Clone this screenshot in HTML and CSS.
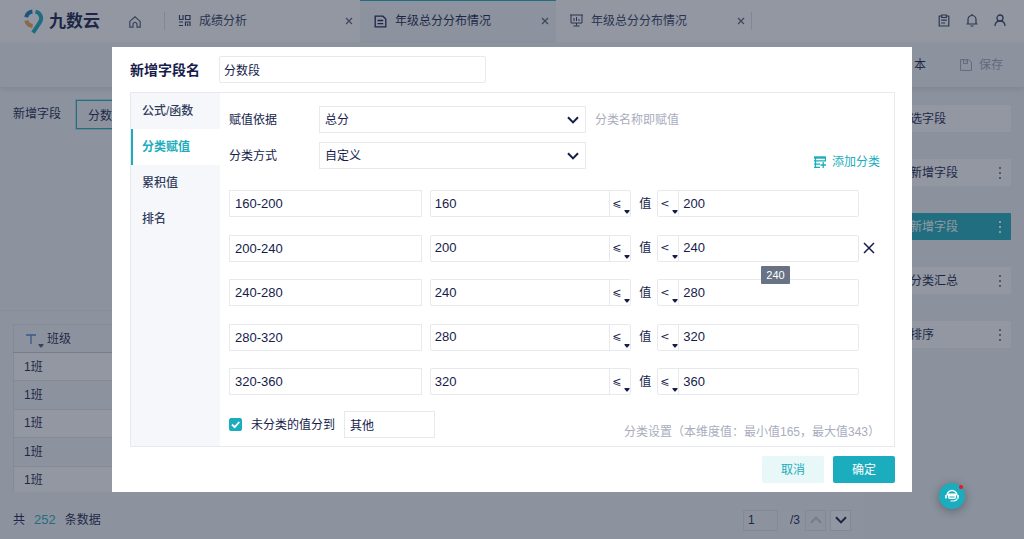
FILE: index.html
```html
<!DOCTYPE html>
<html lang="zh-CN">
<head>
<meta charset="utf-8">
<meta name="viewport" content="width=device-width, initial-scale=1">
<title>九数云</title>
<link rel="stylesheet" href="styles.css">
</head>
<body>
<svg class="defs" aria-hidden="true">
  <symbol id="i-chevron" viewBox="0 0 12 8"><path d="M1 1.2 6 6.400l5-5.200" fill="none" stroke="currentColor" stroke-width="2"/></symbol>
  <symbol id="i-close" viewBox="0 0 12 12"><path d="m1 1 10 10M11 1 1 11" fill="none" stroke="currentColor" stroke-width="1.500"/></symbol>
  <symbol id="i-tab-close" viewBox="0 0 8 8"><path d="m1 1 6 6M7 1 1 7" fill="none" stroke="currentColor" stroke-width="1.300"/></symbol>
  <symbol id="i-caret" viewBox="0 0 6 4"><path d="M0.500 0h5v1L3.500 3.500h-1L.5 1z" fill="currentColor"/></symbol>
  <symbol id="i-more" viewBox="0 0 4 12"><path d="M1 0h2v2H1zM1 5h2v2H1zM1 10h2v2H1z" fill="currentColor"/></symbol>
</svg>

<div class="page">
  <header class="topbar">
    <a class="logo" href="#">
      <svg width="20" height="25" viewBox="0 0 20 25" fill="none" stroke-width="4">
        <path d="M2.200 8.200A7.500 7.500 0 0 1 8.400 2.600" stroke="#1779bd"/>
        <path d="M2.200 11.500a7.500 7.500 0 0 0 6.400 5.500" stroke="#f2a34a"/>
        <path d="M11.500 2.600c5.500 1.200 7.200 7 4 11.400L9 23.600" stroke="#16a9b8"/>
      </svg>
      <span>九数云</span>
    </a>
    <a class="home" href="#" aria-label="首页">
      <svg width="12" height="12" viewBox="0 0 12 12" fill="none" stroke="currentColor" stroke-width="1.200"><path d="M.8 5.400 6 .9l5.200 4.500v5.800H8V8.400a2 2 0 0 0-4 0v2.800H.8z"/></svg>
    </a>
    <nav class="tabs" aria-label="打开的页面">
      <div class="tab">
        <svg width="13" height="13" viewBox="0 0 13 13" fill="none" stroke="currentColor" stroke-width="1.200"><path d="M1.500 1v4.500H5V1M7.500 1.500H12v4H7.500zM1 8h4M1 11.500h4M7 8h5v4M7.500 7.500V12M9.700 9.500V12"/></svg>
        <a href="#">成绩分析</a>
        <button class="tab-close" aria-label="关闭"><svg width="8" height="8"><use href="#i-tab-close"/></svg></button>
      </div>
      <div class="tab tab-active">
        <svg width="13" height="13" viewBox="0 0 13 13" fill="none" stroke="currentColor" stroke-width="1.300"><path d="M1.200 1.200H9L11.800 4v7.800H1.200zM3.500 5.500h5.700M3.500 8.700h5.700"/></svg>
        <a href="#" aria-current="page">年级总分分布情况</a>
        <button class="tab-close" aria-label="关闭"><svg width="8" height="8"><use href="#i-tab-close"/></svg></button>
      </div>
      <div class="tab">
        <svg width="13" height="13" viewBox="0 0 13 13" fill="none" stroke="currentColor"><path d="M0 1h13M1 1v8h11V1M4 4v3M6.500 3v4M9 5v2M6.500 9v2.500M3.500 12h6"/></svg>
        <a href="#">年级总分分布情况</a>
        <button class="tab-close" aria-label="关闭"><svg width="8" height="8"><use href="#i-tab-close"/></svg></button>
      </div>
    </nav>
    <div class="top-actions">
      <button aria-label="任务"><svg width="12" height="13" viewBox="0 0 12 13" fill="none" stroke="currentColor" stroke-width="1.200"><path d="M3.500 2H1.200v10h9.600V2H8.500M3.700 1h4.600v2.500H3.700zM3.200 6.200h5.600M3.200 9h4"/></svg></button>
      <button aria-label="通知"><svg width="12" height="13" viewBox="0 0 12 13" fill="none" stroke="currentColor" stroke-width="1.200"><path d="M.5 10h11M2 10V5.500a4 4 0 0 1 8 0V10M6 0v1.500M4.500 12h3"/></svg></button>
      <button aria-label="用户"><svg width="12" height="13" viewBox="0 0 12 13" fill="none" stroke="currentColor" stroke-width="1.300"><circle cx="6" cy="4" r="3"/><path d="M.9 12c.2-3 2-5 5.100-5s4.900 2 5.100 5"/></svg></button>
    </div>
  </header>

  <div class="toolbar">
    <button class="tool">本</button>
    <button class="tool tool-muted" disabled>
      <svg width="12" height="12" viewBox="0 0 12 12" fill="none" stroke="currentColor"><path d="M.6.6h8.200l2.600 2.600v8.200H.6zM3.500.6v4h4v-4M6 1.500v1.500"/></svg>保存
    </button>
  </div>

  <div class="workspace">
    <main class="main">
      <section class="field-bar">
        <label for="field">新增字段</label>
        <input id="field" class="field-chip" value="分数段">
      </section>
      <section class="table-area">
        <table class="data">
          <thead><tr><th scope="col"><div class="th">
            <svg class="type" width="10" height="10" viewBox="0 0 10 10"><path d="M0 1h10M5 1v9" stroke="#4a7fd8" stroke-width="1.300"/></svg>
            <svg class="th-caret" width="6" height="4"><use href="#i-caret"/></svg>
            <span>班级</span><i class="filter"></i>
          </div></th><th></th></tr></thead>
          <tbody>
            <tr><td>1班</td><td></td></tr>
            <tr><td>1班</td><td></td></tr>
            <tr><td>1班</td><td></td></tr>
            <tr><td>1班</td><td></td></tr>
            <tr><td>1班</td><td></td></tr>
          </tbody>
        </table>
      </section>
      <footer class="pager">
        <span>共</span><span class="count">252</span><span>条数据</span>
        <div class="pages">
          <input class="page-no" aria-label="页码" value="1">
          <span class="total">/3</span>
          <button class="page-btn page-off" aria-label="上一页" disabled><svg class="flip" width="12" height="8"><use href="#i-chevron"/></svg></button>
          <button class="page-btn" aria-label="下一页"><svg width="12" height="8"><use href="#i-chevron"/></svg></button>
        </div>
      </footer>
    </main>
    <aside class="steps">
      <div class="step"><span>选字段</span></div>
      <div class="step"><span>新增字段</span><button aria-label="更多"><svg width="4" height="12"><use href="#i-more"/></svg></button></div>
      <div class="step step-active"><span>新增字段</span><button aria-label="更多"><svg width="4" height="12"><use href="#i-more"/></svg></button></div>
      <div class="step"><span>分类汇总</span><button aria-label="更多"><svg width="4" height="12"><use href="#i-more"/></svg></button></div>
      <div class="step"><span>排序</span><button aria-label="更多"><svg width="4" height="12"><use href="#i-more"/></svg></button></div>
    </aside>
  </div>
</div>

<div class="overlay">
  <form class="modal" role="dialog" aria-modal="true" aria-labelledby="modal-title">
    <div class="modal-head">
      <label id="modal-title" for="name">新增字段名</label>
      <input id="name" class="box name" value="分数段">
    </div>
    <div class="panel">
      <nav class="side">
        <a href="#">公式/函数</a>
        <a class="side-active" href="#" aria-current="true">分类赋值</a>
        <a href="#">累积值</a>
        <a href="#">排名</a>
      </nav>
      <div class="content">
        <div class="settings">
          <div class="setting-list">
            <div class="setting">
              <label for="basis">赋值依据</label>
              <div class="pick"><select id="basis" class="box"><option>总分</option></select><svg width="12" height="8"><use href="#i-chevron"/></svg></div>
              <span class="hint">分类名称即赋值</span>
            </div>
            <div class="setting">
              <label for="mode">分类方式</label>
              <div class="pick"><select id="mode" class="box"><option>自定义</option></select><svg width="12" height="8"><use href="#i-chevron"/></svg></div>
            </div>
          </div>
          <button type="button" class="add">
            <svg width="12" height="12" viewBox="0 0 12 12" fill="none" stroke="currentColor"><path d="M0 1.500h12" stroke-width="2.400"/><path d="M0 4.800h11.500V1M1.500 1v10.500M0 8.200h6M0 11.400h6M9.200 6v6M6.500 9h5.500" stroke-width="1.300"/></svg>添加分类
          </button>
        </div>

        <div class="ranges">
          <div class="range">
            <input class="box label-box" aria-label="分类名称" value="160-200">
            <div class="bound"><input aria-label="下限" value="160"><div class="op op-end"><select aria-label="下限比较"><option>⩽</option><option>&lt;</option></select><svg width="6" height="4"><use href="#i-caret"/></svg></div></div>
            <span class="mid">值</span>
            <div class="bound"><div class="op op-start"><select aria-label="上限比较"><option>&lt;</option><option>⩽</option></select><svg width="6" height="4"><use href="#i-caret"/></svg></div><input aria-label="上限" value="200"></div>
          </div>
          <div class="range">
            <input class="box label-box" aria-label="分类名称" value="200-240">
            <div class="bound"><input aria-label="下限" value="200"><div class="op op-end"><select aria-label="下限比较"><option>⩽</option><option>&lt;</option></select><svg width="6" height="4"><use href="#i-caret"/></svg></div></div>
            <span class="mid">值</span>
            <div class="bound"><div class="op op-start"><select aria-label="上限比较"><option>&lt;</option><option>⩽</option></select><svg width="6" height="4"><use href="#i-caret"/></svg></div><input aria-label="上限" value="240"><span class="tooltip" role="tooltip">240</span></div>
            <button type="button" class="remove" aria-label="删除分类"><svg width="12" height="12"><use href="#i-close"/></svg></button>
          </div>
          <div class="range">
            <input class="box label-box" aria-label="分类名称" value="240-280">
            <div class="bound"><input aria-label="下限" value="240"><div class="op op-end"><select aria-label="下限比较"><option>⩽</option><option>&lt;</option></select><svg width="6" height="4"><use href="#i-caret"/></svg></div></div>
            <span class="mid">值</span>
            <div class="bound"><div class="op op-start"><select aria-label="上限比较"><option>&lt;</option><option>⩽</option></select><svg width="6" height="4"><use href="#i-caret"/></svg></div><input aria-label="上限" value="280"></div>
          </div>
          <div class="range">
            <input class="box label-box" aria-label="分类名称" value="280-320">
            <div class="bound"><input aria-label="下限" value="280"><div class="op op-end"><select aria-label="下限比较"><option>⩽</option><option>&lt;</option></select><svg width="6" height="4"><use href="#i-caret"/></svg></div></div>
            <span class="mid">值</span>
            <div class="bound"><div class="op op-start"><select aria-label="上限比较"><option>&lt;</option><option>⩽</option></select><svg width="6" height="4"><use href="#i-caret"/></svg></div><input aria-label="上限" value="320"></div>
          </div>
          <div class="range">
            <input class="box label-box" aria-label="分类名称" value="320-360">
            <div class="bound"><input aria-label="下限" value="320"><div class="op op-end"><select aria-label="下限比较"><option>⩽</option><option>&lt;</option></select><svg width="6" height="4"><use href="#i-caret"/></svg></div></div>
            <span class="mid">值</span>
            <div class="bound"><div class="op op-start"><select aria-label="上限比较"><option>⩽</option><option>&lt;</option></select><svg width="6" height="4"><use href="#i-caret"/></svg></div><input aria-label="上限" value="360"></div>
          </div>
        </div>

        <div class="rest">
          <div class="rest-field">
            <span class="check"><input id="other-on" type="checkbox" checked><svg width="13" height="13" viewBox="0 0 13 13"><path d="m3 6.500 2.700 2.700L10.300 4" fill="none" stroke="#fff" stroke-width="1.800"/></svg></span>
            <label for="other-on">未分类的值分到</label>
            <input class="box other" aria-label="其他分类名称" value="其他">
          </div>
          <span class="hint range-hint">分类设置（本维度值：最小值165，最大值343）</span>
        </div>
      </div>
    </div>
    <div class="modal-foot">
      <button type="button" class="btn btn-light">取消</button>
      <button type="button" class="btn btn-main">确定</button>
    </div>
  </form>
</div>

<button class="service" aria-label="客服">
  <svg width="14" height="14" viewBox="0 0 14 14" fill="none" stroke="#fff"><path d="M2 6.500a5 5 0 0 1 10 0" stroke-width="1.400"/><path d="M1 6v3.500M13 6v3.500" stroke-width="1.600"/><path d="M3.700 4.500h6.600a.8.8 0 0 1 .8.800V8a2 2 0 0 1-2 2H4.900a2 2 0 0 1-2-2V5.300a.8.8 0 0 1 .8-.8z" fill="#fff" stroke="none"/><path d="M4.500 8h5" stroke="#1badbd"/><path d="M12.500 9.500q-1 2.300-4 2.500h-3" stroke-width="1.200"/></svg>
  <i class="dot"></i>
</button>
</body>
</html>
```
FILE: styles.css
```css
:root {
  --ink: #161c4b;
  --teal: #1badbd;
  --line: #e8e9ec;
  --soft: #f4f6f9;
  --muted: #a9adbd;
}
* { box-sizing: border-box; }
body {
  margin: 0;
  font: 12px/18px "Liberation Sans", "Noto Sans CJK SC", sans-serif;
  color: var(--ink);
}
input, select, button { font: inherit; color: inherit; margin: 0; }
button { padding: 0; border: 0; background: none; cursor: pointer; display: flex; align-items: center; }
input, select { outline: 0; border-radius: 0; min-width: 0; }
select { appearance: none; background: transparent; }
a { color: inherit; text-decoration: none; }
svg { display: block; flex: none; }
.defs { position: absolute; width: 0; height: 0; }

.page { min-height: 100vh; display: flex; flex-direction: column; background: var(--soft); }

/* Top bar */
.topbar { display: flex; align-items: center; height: 43px; padding: 0 18px 0 24px; background: #fff; }
.logo { display: flex; align-items: center; gap: 5px; width: 105px; font-size: 17px; font-weight: 700; line-height: 24px; }
.home { width: 35px; color: #4e5675; }
.tabs { display: flex; align-self: stretch; flex: 0 1 588px; min-width: 0; }
.tab { position: relative; flex: 1; min-width: 0; display: flex; align-items: center; gap: 8px; padding: 0 7px 2px 14px; color: #2f375e; }
.tab::before { content: ""; position: absolute; left: 0; top: 12px; height: 18px; border-left: 1px solid #dcdfe5; }
.tab:nth-child(3)::before { left: auto; right: 0; }
.tab-active { background: var(--soft); border-top: 1px solid var(--teal); color: var(--ink); }
.tab-active::before { display: none; }
.tab a { flex: 1; white-space: nowrap; }
.tab-close { color: #565e7c; }
.top-actions { display: flex; gap: 16px; margin-left: auto; padding-bottom: 2px; color: #333b62; }

/* Toolbar */
.toolbar { display: flex; justify-content: flex-end; gap: 34px; height: 44px; padding-right: 21px; box-shadow: 0 2px 6px rgba(20, 35, 60, .12); position: relative; }
.tool { gap: 7px; }
.tool-muted { color: #9da3b6; }

/* Workspace */
.workspace { flex: 1; display: flex; }
.main { flex: 1; display: flex; flex-direction: column; min-width: 0; }
.field-bar { flex: 1; display: flex; align-items: flex-start; gap: 15px; padding: 13px; line-height: 28px; }
.field-chip { width: 268px; height: 29px; padding: 0 11px; border: 1px solid var(--teal); outline: 1px solid rgba(27, 173, 189, .3); background: transparent; }
.table-area { height: 182px; overflow: hidden; padding: 13px 13px 0; border-top: 1px solid #e9edf1; }
.data { width: 100%; height: 171px; border-collapse: collapse; }
.data th, .data td { padding: 0 10px; border: 1px solid #e2e6eb; text-align: left; font-weight: 400; }
.data thead th { width: 130px; height: 28px; border-bottom-color: #c7ccd4; }
.data td { height: 28px; }
.data tbody tr:nth-child(odd) { background: #fff; }
.th { display: flex; align-items: center; }
.type { margin-left: 2px; }
.th-caret { align-self: flex-end; margin: 0 3px 0 2px; color: #4e5675; }
.filter { margin-left: auto; width: 24px; height: 16px; background: #fff; border: 1px solid #dde1e7; }
.pager { display: flex; align-items: center; gap: 9px; height: 47px; padding: 9px 13px 0; }
.count { color: var(--teal); font-size: 13px; }
.pages { display: flex; align-items: center; gap: 4px; margin-left: auto; }
.page-no { width: 35px; height: 21px; padding: 0 4px; border: 1px solid #e0e4e9; background: transparent; }
.total { margin: 0 1px 0 8px; }
.page-btn { width: 21px; height: 21px; justify-content: center; border: 1px solid #e0e4e9; background: #fff; }
.page-off { color: #c3c7d0; background: var(--soft); }
.flip { transform: rotate(180deg); }
.steps { width: 160px; display: flex; flex-direction: column; gap: 27px; padding: 18px 13px 18px 16px; background: #f1f4f7; }
.step { display: flex; align-items: center; justify-content: space-between; height: 27px; padding: 0 9px 0 30px; border-radius: 1px; background: #fff; }
.step button { color: #7d8396; }
.step-active, .step-active button { background: var(--teal); color: #fff; }

/* Dialog */
.overlay { position: fixed; inset: 0; display: flex; align-items: center; justify-content: center; padding: 12px; background: rgba(37, 47, 67, .5); }
.modal { width: 100%; max-width: 800px; padding: 9px 17px 9px 18px; background: #fff; }
.modal-head { display: flex; align-items: center; gap: 19px; font-size: 14px; font-weight: 700; }
.box { height: 27px; padding: 0 5px; border: 1px solid var(--line); background: #fff; }
.name { width: 267px; border-radius: 2px; padding: 0 4px; font-size: 12px; font-weight: 400; }
.panel { display: flex; margin: 9px 0; min-height: 355px; border: 1px solid var(--line); }
.side { flex: 0 0 89px; background: #f5f7fa; color: #323c5d; font-weight: 500; }
.side a { display: block; padding-left: 11px; line-height: 36px; }
.side .side-active { padding-left: 9px; border-left: 2px solid var(--teal); background: #fff; color: var(--teal); font-weight: 700; }
.content { flex: 1; min-width: 0; display: flex; flex-direction: column; padding: 13px 14px 4px 9px; }
.settings { display: flex; justify-content: space-between; min-height: 70px; }
.setting-list { display: flex; flex-direction: column; gap: 9px; }
.setting { display: flex; align-items: center; }
.setting label { width: 90px; }
.pick { position: relative; width: 267px; }
.pick select { width: 100%; }
.pick svg { position: absolute; right: 7px; top: 10px; pointer-events: none; }
.hint { color: var(--muted); }
.setting .hint { margin-left: 9px; }
.add { align-self: flex-end; gap: 6px; line-height: 28px; color: var(--teal); }
.ranges { flex: 1; display: flex; flex-direction: column; justify-content: space-between; gap: 8px; margin: 14px 0 16px; font-size: 13px; }
.range { display: grid; grid-template-columns: 193fr 202fr 10px 202fr 13px; column-gap: 8px; align-items: center; }
.label-box { width: 100%; }
.bound { position: relative; display: flex; height: 27px; border: 1px solid var(--line); border-radius: 2px; }
.bound input { flex: 1; width: 0; border: 0; padding: 0 4px; background: transparent; }
.op { position: relative; width: 21px; }
.op-end { border-left: 1px solid var(--line); }
.op-start { border-right: 1px solid var(--line); }
.op select { width: 100%; height: 100%; padding: 0 2px; border: 0; font-family: "DejaVu Sans", sans-serif; font-size: 11px; }
.op svg { position: absolute; right: 0; bottom: 2px; pointer-events: none; }
.mid { font-size: 12px; }
.remove { justify-self: start; margin-left: -4px; }
.tooltip { position: absolute; z-index: 1; left: 103px; top: 30px; padding: 0 5px; border-radius: 1px; background: #687385; color: #fff; font-size: 11px; line-height: 18px; }
.rest { display: flex; justify-content: space-between; min-height: 31px; }
.rest-field { display: flex; align-items: center; align-self: flex-start; gap: 9px; }
.check { position: relative; width: 13px; height: 13px; }
.check input { appearance: none; display: block; width: 13px; height: 13px; border: 1px solid var(--teal); border-radius: 2px; }
.check input:checked { background: var(--teal); }
.check svg { position: absolute; inset: 0; pointer-events: none; }
.other { width: 91px; }
.range-hint { align-self: flex-end; line-height: 20px; }
.modal-foot { display: flex; justify-content: flex-end; gap: 9px; }
.btn { width: 62px; height: 27px; justify-content: center; border-radius: 2px; }
.btn-light { background: #e8f7f8; color: var(--teal); }
.btn-main { background: var(--teal); color: #fff; }

.service { position: fixed; right: 59px; bottom: 30px; width: 26px; height: 26px; justify-content: center; border-radius: 50%; background: var(--teal); box-shadow: 0 2px 10px rgba(20, 30, 50, .4); }
.dot { position: absolute; top: 2px; right: 2px; width: 4px; height: 4px; border-radius: 50%; background: #f5121d; }
```
